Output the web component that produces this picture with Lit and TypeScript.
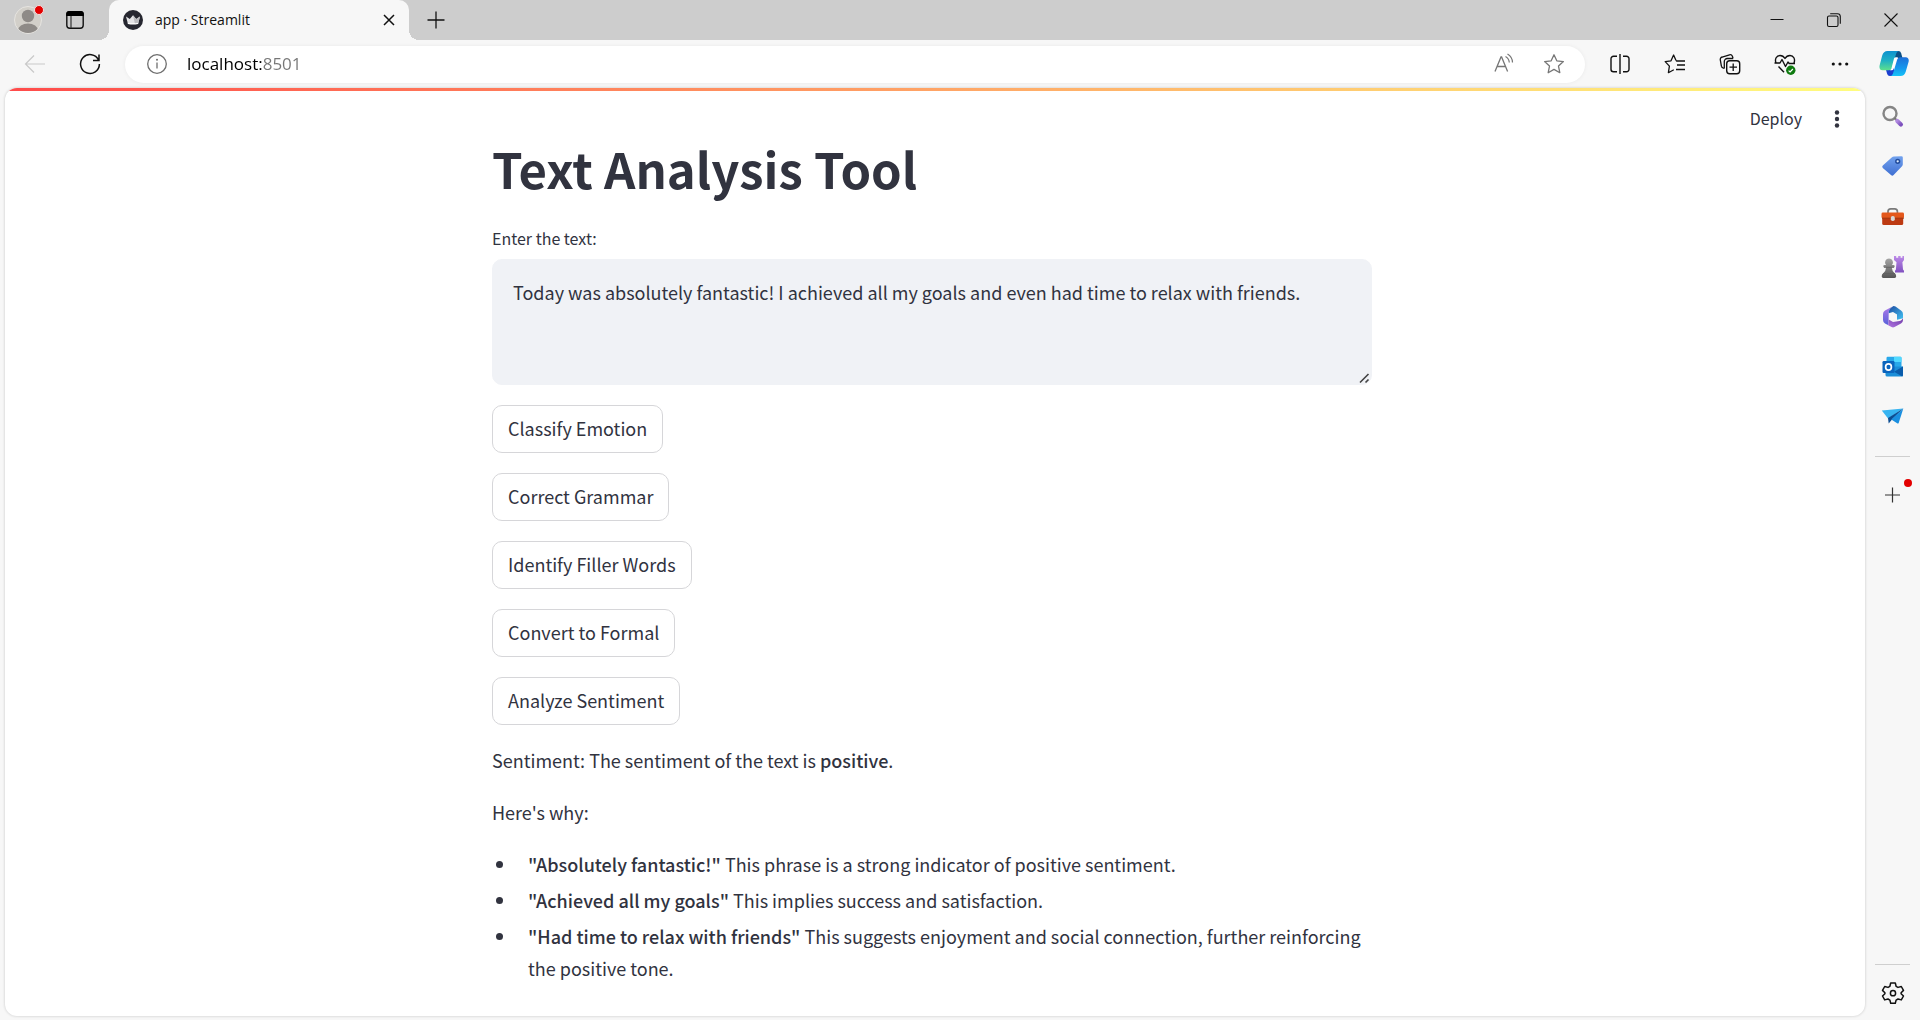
import { LitElement, html, css, svg } from "lit";
import { customElement, property } from "lit/decorators.js";

const icons: Record<string, unknown> = {
  avatar: svg`
    <defs><clipPath id="face"><circle cx="14" cy="14" r="13"/></clipPath></defs>
    <circle cx="14" cy="14" r="13.5" fill="#d2cfc9" stroke="#e6e4e0"/>
    <g clip-path="url(#face)" fill="#8e8a87"><circle cx="14" cy="10" r="6.2"/><ellipse cx="14" cy="24.5" rx="10" ry="7"/></g>`,
  workspaces: svg`
    <rect x="1.8" y="1.8" width="16.4" height="16.4" rx="3" fill="none" stroke="#111" stroke-width="1.4"/>
    <path d="M1.2 6V4a3 3 0 0 1 3-3h11.6a3 3 0 0 1 3 3v2z" fill="#000"/>
    <path d="M6 6v12" stroke="#333" stroke-width="1.2"/>`,
  streamlit: svg`
    <circle cx="10" cy="10" r="10" fill="#262730"/>
    <path d="M3 6.4 6.8 9 10 5.2 13.2 9 17 6.4 15 14H5z" fill="#e4e4e6"/>
    <path d="M10 5.2 13.2 9 17 6.4 15 14h-3z" fill="#bcbcc0"/>
    <path d="M5 14q5 1.2 10 0l.4-1.2q-5.4 1-10.8 0z" fill="#fff"/>`,
  tabClose: svg`<path d="m5 5 10 10M15 5 5 15" stroke="#111" stroke-width="1.5"/>`,
  plus: svg`<path d="M10 1.5v17M1.500 10h17" stroke="#111" stroke-width="1.3"/>`,
  minimize: svg`<path d="M3.5 9.5h13" stroke="#111"/>`,
  restore: svg`
    <rect x="3.5" y="6" width="10.5" height="10.5" rx="1.5" fill="none" stroke="#111" stroke-width="1.1"/>
    <path d="M6.2 3.7h7.3a2.8 2.8 0 0 1 2.8 2.8v7.300" fill="none" stroke="#111" stroke-width="1.1"/>`,
  windowClose: svg`<path d="m3.5 3.500 13 13M16.500 3.500l-13 13" stroke="#111" stroke-width="1.1"/>`,
  back: svg`<path d="M22 12H2.5M11 3.500 2.500 12l8.500 8.500" fill="none" stroke="#c9c9c9" stroke-width="1.2"/>`,
  reload: svg`<path d="M20.5 8A9.400 9.400 0 1 0 21.400 12M21 2.500V8.500h-6" fill="none" stroke="#111" stroke-width="1.5"/>`,
  info: svg`
    <circle cx="10" cy="10" r="9.3" fill="none" stroke="#6e6e6e" stroke-width="1.3"/>
    <path d="M10 8.5v6" stroke="#6e6e6e" stroke-width="1.3"/><circle cx="10" cy="5.7" r="1" fill="#6e6e6e"/>`,
  readAloud: svg`
    <path d="M3 19.5 9 5h.6l6 14.500M5.200 14.500h8.200" fill="none" stroke="#767676" stroke-width="1.3"/>
    <path d="M13.5 4.500q3.500 2 3.800 6M15.500 2q5 3 5 8.500" fill="none" stroke="#767676" stroke-width="1.2"/>`,
  star: svg`<path d="m12 2.8 2.800 6 6.600.8-4.900 4.500 1.300 6.600-5.800-3.300-5.800 3.300 1.300-6.600L2.600 9.600l6.600-.8z" fill="none" stroke="#767676" stroke-width="1.3" stroke-linejoin="round"/>`,
  split: svg`
    <path d="M9 4.3H5.500a2.500 2.500 0 0 0-2.500 2.500v10.400a2.500 2.500 0 0 0 2.500 2.500H9M15 4.300h3.500A2.500 2.500 0 0 1 21 6.800v10.400a2.500 2.500 0 0 1-2.500 2.500H15M12 2v20" fill="none" stroke="#111" stroke-width="1.4"/>`,
  favorites: svg`
    <path d="M13 8.5 10.600 3 8 8.800l-5.800.8 4.200 4.500-1 6.600 5.400-3M13 8.800l1 .2h8M14 13h8M13 17.500h9" fill="none" stroke="#111" stroke-width="1.3" stroke-linejoin="round"/>`,
  collections: svg`
    <rect x="8.7" y="8.7" width="13" height="13" rx="3" fill="#f7f7f7" stroke="#111" stroke-width="1.4"/>
    <path d="M15.2 11.500v7.500M11.500 15.200H19M6.300 16.500 5 16a2.500 2.500 0 0 1-1.600-1.800L2.300 8A2.500 2.500 0 0 1 4.200 5l7.300-2.200a2.500 2.500 0 0 1 2.900 1.500l.6 1.800M6.300 16.500V9.500a3 3 0 0 1 3-3h6" fill="none" stroke="#111" stroke-width="1.3"/>`,
  health: svg`
    <path d="M3 11C1.5 7 3.500 3.500 7 3.500c2.500 0 4 1.300 5 3 1-1.700 2.500-3 5-3 3.500 0 5.500 3.500 4 7.500M1.500 11h5.500l2-3.500 3.500 7L15 10l1.200 1.500H22M5.500 14.500l5.500 5.800" fill="none" stroke="#111" stroke-width="1.4" stroke-linejoin="round"/>
    <circle cx="17.8" cy="18.3" r="4.7" fill="#0f7b10"/><path d="m15.6 18.600 1.500 1.400 2.800-3" fill="none" stroke="#fff" stroke-width="1.2"/>`,
  more: svg`<g fill="#111"><circle cx="5.3" cy="12" r="1.6"/><circle cx="12" cy="12" r="1.6"/><circle cx="18.7" cy="12" r="1.6"/></g>`,
  copilot: svg`
    <defs>
      <linearGradient id="ca" x1="0" y1="0" x2="0" y2="1"><stop offset="0" stop-color="#0d91cf"/><stop offset=".5" stop-color="#20b1c4"/><stop offset="1" stop-color="#5ee08c"/></linearGradient>
      <linearGradient id="cb" x1="0" y1="0" x2="0" y2="1"><stop offset="0" stop-color="#1d6fd8"/><stop offset=".6" stop-color="#1599ee"/><stop offset="1" stop-color="#17c3f7"/></linearGradient>
    </defs>
    <path d="M15 2h4.5q2 0 2.600 2l1.400 5H16z" fill="#0b4f86"/>
    <path d="M15 27h-4.2q-2 0-2.600-2l-1.700-6H15z" fill="#1b3fd0"/>
    <path d="M8.5 2H20q-2 0-2.800 2.500L13 19q-.8 2.300-3 2.300H3.500Q-.2 21 .6 16.500L3.200 6.500Q4.500 2 8.500 2z" fill="url(#ca)"/>
    <path d="M21.5 27H11q2.200 0 3-2.500l4.200-14q.8-2.200 3-2.200h5.500q3.700.4 2.900 4.500L26.800 22.500Q25.500 27 21.500 27z" fill="url(#cb)"/>
    <path d="M15 9.500q.6-1.200 2-1.200h2.200q-1.300.6-1.800 2.300L14.600 20q-.5 1.300-1.800 1.300h-2q1.200-.4 1.700-2z" fill="#fff"/>`,
  search: svg`
    <defs><linearGradient id="sh" x1="0" y1="0" x2="1" y2="1"><stop offset="0" stop-color="#b18ae0"/><stop offset="1" stop-color="#7c50bd"/></linearGradient></defs>
    <circle cx="9" cy="8.5" r="6.5" fill="none" stroke="#858585" stroke-width="2.4"/>
    <path d="m13.5 13 3.500 3.500" stroke="#777" stroke-width="2"/>
    <path d="m16.3 16 3.600 3.600" stroke="url(#sh)" stroke-width="4.2" stroke-linecap="round"/>`,
  shopping: svg`
    <defs><linearGradient id="tg" x1="0" y1="0" x2="0" y2="1"><stop offset="0" stop-color="#72a2ee"/><stop offset="1" stop-color="#3f6fd2"/></linearGradient></defs>
    <path d="m13 1.5 7.500-.2q1.300 0 1.300 1.300v6.700q0 1.200-.8 2l-8.400 8.800q-1.300 1.200-2.600 0L1.800 13q-1.200-1.300 0-2.600L10.700 2.500q1-1 2.300-1z" fill="url(#tg)"/>
    <circle cx="16.7" cy="6.3" r="1.9" fill="#dcebff" stroke="#234d9d" stroke-width="1.5"/>`,
  tools: svg`
    <path d="M7 8V6.500q0-2.700 2.700-2.700h4q2.700 0 2.700 2.700V8" fill="none" stroke="#7a7a7a" stroke-width="1.7"/>
    <rect x="1.2" y="12" width="21" height="8" rx="1.5" fill="#bd3a12"/>
    <rect x=".5" y="7.5" width="22.5" height="6" rx="1.4" fill="#e4581c"/>
    <path d="M1 13.2h22" stroke="#8f2c0d" stroke-width=".8"/>
    <rect x="9.8" y="11" width="4" height="5" rx="1.8" fill="#d7d7d7"/>`,
  games: svg`
    <defs>
      <linearGradient id="pw" x1="0" y1="0" x2="0" y2="1"><stop offset="0" stop-color="#a5a5a5"/><stop offset="1" stop-color="#555"/></linearGradient>
      <linearGradient id="rk" x1="0" y1="0" x2="0" y2="1"><stop offset="0" stop-color="#bd8be8"/><stop offset="1" stop-color="#8050c0"/></linearGradient>
    </defs>
    <path d="M13 1h2.2v1.700h2V1h2.400v1.700h1.800V1H23v4l-1.600 2.200.6 7.300 1 1.300v1.700h-9v-1.700l.9-1.300.6-7.300L13 5z" fill="url(#rk)"/>
    <path d="M8 3.5a4 4 0 0 1 3 6.600h1.500a1.200 1.200 0 0 1 0 2.400h-1.700q.3 3.500 2.600 5.500 1.800 1 1.800 3.200 0 1.800-1.600 1.800H2.300Q.7 23 .7 21.200q0-2.200 1.800-3.200 2.300-2 2.600-5.500H3.500a1.200 1.200 0 0 1 0-2.400H5a4 4 0 0 1 3-6.600z" fill="url(#pw)"/>
    <path d="M3 12.3h10M2 18.500h12" stroke="#606060" stroke-width=".8"/>`,
  office: svg`
    <defs>
      <linearGradient id="o1" x1="0" y1="0" x2="0" y2="1"><stop offset="0" stop-color="#b279ea"/><stop offset="1" stop-color="#5661d9"/></linearGradient>
      <linearGradient id="o2" x1="0" y1="0" x2="1" y2="1"><stop offset="0" stop-color="#1c4aa0"/><stop offset="1" stop-color="#42c3f4"/></linearGradient>
      <linearGradient id="o3" x1="0" y1="1" x2="1" y2="0"><stop offset="0" stop-color="#b77ae8"/><stop offset="1" stop-color="#6f3ca7"/></linearGradient>
    </defs>
    <path d="M12.5 1 4 5.500Q2 6.700 2 9v6q0 2.400 2 3.500l3.500 1.800.2-13Q8 3.500 12.500 1z" fill="url(#o1)"/>
    <path d="M12.5 1q-5 2.500-4.800 7.300L12 7l4 2.500v5.200l6-1.400V9q0-2.300-2-3.500l-5.500-4q-1-.6-2-.5z" fill="url(#o2)"/>
    <path d="M4 18.5 10.500 22q1.500.8 3 0l6.500-3.600q2-1.100 2-3.400v-1.700q-1.500 3-5 3L12 17l-4.300-2.500-.3 5.700z" fill="url(#o3)"/>
    <path d="m12 7.700 3.600 2v4.200L12 16l-3.600-2.100V9.700z" fill="#f7f7f7"/>`,
  outlook: svg`
    <rect x="5.5" y="1.8" width="15" height="13" rx="1.2" fill="#28a8ea"/>
    <path d="M13 1.8h6.300q1.200 0 1.200 1.200v4H13z" fill="#50d9ff"/>
    <path d="M5.5 7H13v7H5.500z" fill="#0878c8"/>
    <path d="M4.5 11.500h17.500V20q0 1.500-1.500 1.500H6q-1.500 0-1.500-1.500z" fill="#1b8ed8"/>
    <path d="m22 11.5-9 5.200 8.300 4.700q.7-.4.700-1.400z" fill="#0a5cab"/>
    <rect x="1.5" y="6" width="12" height="12" rx="1.2" fill="#0a64bd"/>
    <ellipse cx="7.5" cy="12" rx="2.9" ry="3.2" fill="none" stroke="#fff" stroke-width="1.7"/>`,
  drop: svg`
    <path d="M.8 5.500 22.300 3.500 7 13.500z" fill="#37b4f1"/>
    <path d="M22.3 3.500 7 13l.7 5.500 3.300-4z" fill="#0c4d92"/>
    <path d="m22.3 3.500-12 11 6.200 4q.8.300 1.200-.6z" fill="#1a8fe0"/>`,
  sidePlus: svg`<path d="M11.500 4.500v15M4 12h15" stroke="#333" stroke-width="1.2"/>`,
  settings: svg`
    <path d="M9.7 2h4.600l.8 3.300 1.900 1.100 3.300-.9 2.200 3.900-2.400 2.400v.9l2.400 2.300-2.200 3.900-3.300-.9-1.900 1.100-.8 3.100H9.700l-.8-3.100L7 18l-3.300.9L1.500 15l2.400-2.300v-.9L1.500 9.400l2.200-3.900 3.300.9 1.900-1.100z" fill="none" stroke="#111" stroke-width="1.5" stroke-linejoin="round"/>
    <circle cx="12" cy="12.2" r="2.6" fill="none" stroke="#111" stroke-width="1.5"/>`,
  kebab: svg`<g fill="#31333f"><circle cx="12" cy="5.5" r="2.2"/><circle cx="12" cy="12" r="2.2"/><circle cx="12" cy="18.5" r="2.2"/></g>`,
};

@customElement("ui-icon")
class UiIcon extends LitElement {
  @property() name = "";
  @property({ type: Number }) size = 24;
  @property({ type: Number }) box = 24;

  static styles = css`
    :host { display: block; flex: none; }
    .glyph { display: block; }
  `;

  render() {
    return html`<svg class="glyph" width=${this.size} height=${this.size}
      viewBox="0 0 ${this.box} ${this.box}" aria-hidden="true">${icons[this.name]}</svg>`;
  }
}

@customElement("tab-strip")
class TabStrip extends LitElement {
  static styles = css`
    :host { display: block; font-family: "Open Sans", "Noto Sans", sans-serif; }
    button { border: 0; padding: 0; background: none; display: flex; align-items: center; justify-content: center; font: inherit; }
    .strip { display: flex; align-items: stretch; height: 40px; background: #cdcdcd; }
    .profile { position: relative; width: 28px; margin-left: 14px; }
    .alert { position: absolute; top: 5px; right: -2px; width: 8px; height: 8px; border: 1px solid #f4dede; border-radius: 50%; background: #e30000; }
    .spaces { width: 66px; }
    .tab { position: relative; display: flex; align-items: center; width: 300px; box-sizing: border-box; padding: 0 10px 0 14px; margin-left: 1px; background: #f7f7f7; border-radius: 10px 10px 0 0; }
    .tab::before, .tab::after { content: ""; position: absolute; bottom: 0; width: 10px; height: 10px; }
    .tab::before { left: -10px; background: radial-gradient(circle at 0 0, transparent 10px, #f7f7f7 10px); }
    .tab::after { right: -10px; background: radial-gradient(circle at 100% 0, transparent 10px, #f7f7f7 10px); }
    .name { flex: 1; margin-left: 12px; font-size: 14px; line-height: 20px; color: #111; white-space: nowrap; }
    .shut { width: 20px; height: 20px; }
    .new { width: 53px; }
    .controls { display: flex; margin-left: auto; padding-right: 1px; }
    .control { width: 57px; }
  `;

  render() {
    return html`
      <header class="strip">
        <button class="profile" aria-label="Profile"><ui-icon name="avatar" size="28" box="28"></ui-icon><span class="alert"></span></button>
        <button class="spaces" aria-label="Workspaces"><ui-icon name="workspaces" size="20" box="20"></ui-icon></button>
        <div class="tab">
          <ui-icon name="streamlit" size="20" box="20"></ui-icon>
          <span class="name">app · Streamlit</span>
          <button class="shut" aria-label="Close tab"><ui-icon name="tabClose" size="20" box="20"></ui-icon></button>
        </div>
        <button class="new" aria-label="New tab"><ui-icon name="plus" size="20" box="20"></ui-icon></button>
        <div class="controls">
          ${["minimize", "restore", "windowClose"].map(
            (n) => html`<button class="control" aria-label=${n}><ui-icon name=${n} size="20" box="20"></ui-icon></button>`
          )}
        </div>
      </header>
    `;
  }
}

@customElement("address-bar")
class AddressBar extends LitElement {
  static styles = css`
    :host { display: block; font-family: "Open Sans", "Noto Sans", sans-serif; }
    button { border: 0; padding: 0; background: none; display: flex; align-items: center; justify-content: center; flex: none; }
    .bar { display: flex; align-items: center; height: 48px; padding-left: 7px; }
    .tool { width: 55px; height: 40px; }
    .pill { flex: 1; min-width: 0; display: flex; align-items: center; height: 37px; margin: 0 7px 0 8px; padding: 0 6px 0 22px; box-sizing: border-box; background: #fff; border-radius: 19px; box-shadow: 0 0 4px #0000000f; }
    .url { flex: 1; min-width: 0; border: 0; padding: 0; margin-left: 20px; outline: none; font: 17px/24px "Open Sans", "Noto Sans", sans-serif; color: #111; caret-color: #111; background: linear-gradient(to right, #000 75px, #767676 75px); -webkit-background-clip: text; background-clip: text; -webkit-text-fill-color: transparent; }
    .inner { width: 50px; height: 36px; }
    .copilot { width: 53px; height: 40px; }
  `;

  render() {
    return html`
      <nav class="bar" aria-label="Browser toolbar">
        <button class="tool" aria-label="Back" disabled><ui-icon name="back"></ui-icon></button>
        <button class="tool" aria-label="Reload"><ui-icon name="reload"></ui-icon></button>
        <div class="pill">
          <button aria-label="Site information"><ui-icon name="info" size="20" box="20"></ui-icon></button>
          <input class="url" type="text" aria-label="Address" value="localhost:8501" />
          <button class="inner" aria-label="Read aloud"><ui-icon name="readAloud"></ui-icon></button>
          <button class="inner" aria-label="Add to favorites"><ui-icon name="star"></ui-icon></button>
        </div>
        ${["split", "favorites", "collections", "health", "more"].map(
          (n) => html`<button class="tool" aria-label=${n}><ui-icon name=${n}></ui-icon></button>`
        )}
        <button class="copilot" aria-label="Copilot"><ui-icon name="copilot" size="30" box="30"></ui-icon></button>
      </nav>
    `;
  }
}

@customElement("side-rail")
class SideRail extends LitElement {
  static styles = css`
    :host { display: block; }
    button { border: 0; padding: 0; background: none; display: flex; align-items: center; justify-content: center; }
    .rail { display: flex; flex-direction: column; align-items: center; height: 100%; box-sizing: border-box; padding-top: 4px; }
    .app { position: relative; width: 55px; height: 50px; }
    .rule { width: 35px; height: 1px; margin: 0; border: 0; background: #cfcfcf; }
    .first { margin: 14px 0 13px; }
    .dot { position: absolute; top: 9px; right: 8px; width: 8px; height: 8px; border-radius: 50%; background: #e30000; }
    .bottom { margin-top: auto; display: flex; flex-direction: column; align-items: center; }
    .gear { width: 55px; height: 55px; }
  `;

  render() {
    return html`
      <aside class="rail" aria-label="Sidebar apps">
        ${["search", "shopping", "tools", "games", "office", "outlook", "drop"].map(
          (n) => html`<button class="app" aria-label=${n}><ui-icon name=${n}></ui-icon></button>`
        )}
        <hr class="rule first" />
        <button class="app" aria-label="Customize"><ui-icon name="sidePlus"></ui-icon><span class="dot"></span></button>
        <div class="bottom">
          <hr class="rule" />
          <button class="gear" aria-label="Settings"><ui-icon name="settings"></ui-icon></button>
        </div>
      </aside>
    `;
  }
}

@customElement("analysis-page")
class AnalysisPage extends LitElement {
  private actions = ["Classify Emotion", "Correct Grammar", "Identify Filler Words", "Convert to Formal", "Analyze Sentiment"];
  private reasons = [
    { phrase: '"Absolutely fantastic!"', note: "This phrase is a strong indicator of positive sentiment." },
    { phrase: '"Achieved all my goals"', note: "This implies success and satisfaction." },
    { phrase: '"Had time to relax with friends"', note: "This suggests enjoyment and social connection, further reinforcing the positive tone." },
  ];

  static styles = css`
    :host { display: block; }
    .page { position: relative; height: 100%; box-sizing: border-box; padding: 0 6px 24px 0; overflow: hidden; background: #fff; border-radius: 12px; box-shadow: 0 0 3px #00000033; font: 18px/32px "Source Sans Pro", "Noto Sans CJK SC", sans-serif; color: #31333f; }
    .ribbon { position: absolute; top: 0; left: 0; right: 0; height: 3px; background: linear-gradient(90deg, #ff4b4b, #fffd80); }
    .actions { position: absolute; top: 14px; right: 16px; display: flex; align-items: center; }
    .deploy, .menu { border: 0; padding: 0; background: none; font: 16px/32px "Source Sans Pro", "Noto Sans CJK SC", sans-serif; color: inherit; }
    .deploy { margin-right: 23px; padding-bottom: 2px; }
    .content { max-width: 880px; margin: 0 auto; padding-top: 44px; }
    .title { margin: 0; padding: 0; font-size: 49px; line-height: 72px; font-weight: 700; }
    .label { display: block; margin-top: 20px; font-size: 16px; line-height: 28px; }
    .entry { display: block; width: 100%; height: 126px; margin: 7px 0 20px; box-sizing: border-box; padding: 18px 20px; border: 1px solid #f0f2f6; border-radius: 10px; background: #f0f2f6; font: 18px/28px "Source Sans Pro", "Noto Sans CJK SC", sans-serif; color: #31333f; resize: vertical; outline: none; }
    .entry::-webkit-resizer { background: url("data:image/svg+xml,%3Csvg xmlns='http://www.w3.org/2000/svg' width='15' height='15'%3E%3Cpath d='M4 13.5 12.500 5M9.500 13.500l3-3' stroke='%23444' stroke-width='1.600'/%3E%3C/svg%3E") no-repeat right bottom; }
    .steps { display: flex; flex-direction: column; align-items: flex-start; gap: 20px; }
    .step { height: 48px; padding: 0 15px 2px; border: 1px solid #d6d6d9; border-radius: 10px; background: #fff; font: 18px/32px "Source Sans Pro", "Noto Sans CJK SC", sans-serif; color: #31333f; }
    .result { margin-top: 19px; }
    .para { margin: 0 0 20px; }
    .list { margin: 0; padding: 0 0 0 25px; }
    .reason { margin-bottom: 4px; padding-left: 11px; }
    strong { font-weight: 500; }
  `;

  render() {
    return html`
      <main class="page">
        <div class="ribbon"></div>
        <div class="actions">
          <button class="deploy">Deploy</button>
          <button class="menu" aria-label="Main menu"><ui-icon name="kebab"></ui-icon></button>
        </div>
        <div class="content">
          <h1 class="title">Text Analysis Tool</h1>
          <label class="label" for="entry">Enter the text:</label>
          <textarea class="entry" id="entry" spellcheck="false" .value=${"Today was absolutely fantastic! I achieved all my goals and even had time to relax with friends."}></textarea>
          <div class="steps">${this.actions.map((a) => html`<button class="step">${a}</button>`)}</div>
          <section class="result">
            <p class="para">Sentiment: The sentiment of the text is <strong>positive</strong>.</p>
            <p class="para">Here's why:</p>
            <ul class="list">
              ${this.reasons.map((r) => html`<li class="reason"><strong>${r.phrase}</strong> ${r.note}</li>`)}
            </ul>
          </section>
        </div>
      </main>
    `;
  }
}

@customElement("app-root")
class AppRoot extends LitElement {
  static styles = css`
    :host { display: block; }
    .window { display: flex; flex-direction: column; min-height: 100vh; background: #f7f7f7; }
    .body { flex: 1; display: flex; }
    .view { flex: 1; min-width: 0; margin: 0 0 4px 5px; }
  `;

  render() {
    return html`
      <div class="window">
        <tab-strip></tab-strip>
        <address-bar></address-bar>
        <div class="body">
          <analysis-page class="view"></analysis-page>
          <side-rail></side-rail>
        </div>
      </div>
    `;
  }
}
